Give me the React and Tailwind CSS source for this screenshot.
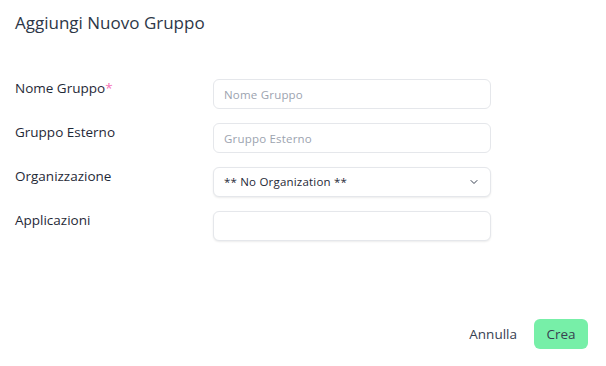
import React from "react";

function Field({ label, required, children }) {
  return (
    <div className="flex items-start">
      <div className="w-[198px] -mt-[1px] text-[13.5px] leading-[20px] text-[#1f2937]">
        {label}
        {required && <span className="text-[#f472b6]">*</span>}
      </div>
      {children}
    </div>
  );
}

export default function App() {
  const inputCls =
    "w-[278px] h-[30px] rounded-[6px] border border-[#e5e7eb] bg-white px-[10px] text-[11.5px] tracking-[0.2px] text-[#1f2937] placeholder:text-[#9ca3af] outline-none";
  return (
    <div
      className="w-[606px] h-[366px] bg-white relative"
      style={{ fontFamily: '"Open Sans", "Liberation Sans", sans-serif' }}
    >
      <div className="px-[15px] pt-[11px] h-[48px] text-[17px] leading-[24px] font-medium text-[#2d3748]">
        Aggiungi Nuovo Gruppo
      </div>
      <div className="pl-[15px] pt-[31px] flex flex-col gap-[14px]">
        <Field label="Nome Gruppo" required>
          <input className={inputCls} placeholder="Nome Gruppo" />
        </Field>
        <Field label="Gruppo Esterno">
          <input className={inputCls} placeholder="Gruppo Esterno" />
        </Field>
        <Field label="Organizzazione">
          <div className="w-[278px] h-[30px] rounded-[6px] border border-[#e5e7eb] bg-white px-[10px] flex items-center justify-between text-[11.5px] tracking-[0.2px] text-[#1f2937] shadow-[0_1px_2px_rgba(0,0,0,0.08)]">
            <span>** No Organization **</span>
            <svg width="12" height="12" viewBox="0 0 24 24" fill="none" stroke="#374151" strokeWidth="2" strokeLinecap="round" strokeLinejoin="round">
              <path d="M6 9l6 6 6-6" />
            </svg>
          </div>
        </Field>
        <Field label="Applicazioni">
          <div className="w-[278px] h-[30px] rounded-[6px] border border-[#e5e7eb] bg-white shadow-[0_1px_2px_rgba(0,0,0,0.08)]" />
        </Field>
      </div>
      <div className="absolute right-[18px] bottom-[17px] flex items-center gap-[16px]">
        <button className="h-[30px] px-[1px] text-[13.5px] text-[#374151]">Annulla</button>
        <button className="h-[30px] w-[54px] rounded-[6px] bg-[#77efa8] text-[13.5px] text-[#374151]">Crea</button>
      </div>
    </div>
  );
}
